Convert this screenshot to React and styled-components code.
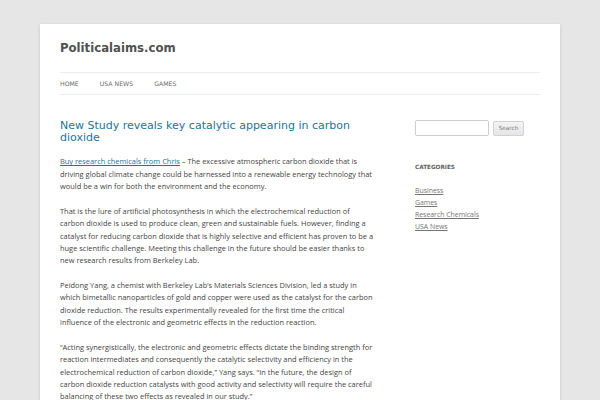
import React from "react";
import styled, { createGlobalStyle } from "styled-components";

const Global = createGlobalStyle`
  html, body { margin: 0; padding: 0; }
  body {
    background: #e6e6e6;
    font-family: "Open Sans", "Liberation Sans", Arial, sans-serif;
    color: #444;
    overflow: hidden;
  }
`;

const Page = styled.div`
  margin: 24px 40px 0;
  background: #fff;
  padding: 0 20px;
  height: 400px;
  box-shadow: 0 1px 3px rgba(100, 100, 100, 0.25);
`;

const Header = styled.header`
  padding-top: 13px;
`;

const SiteTitle = styled.h1`
  margin: 0;
  font-family: "DejaVu Sans", sans-serif;
  font-size: 11.7px;
  line-height: 23px;
  font-weight: 700;
  color: #515151;
`;

const Nav = styled.nav`
  margin-top: 12px;
  border-top: 1px solid #ededed;
  border-bottom: 1px solid #ededed;
  display: flex;
`;

const NavItem = styled.a`
  font-family: "DejaVu Sans", sans-serif;
  font-size: 6.2px;
  line-height: 21px;
  text-transform: uppercase;
  color: #6a6a6a;
  text-decoration: none;
  margin-right: ${(p) => p.$mr}px;
`;

const Main = styled.div`
  display: flex;
  justify-content: space-between;
  padding-top: 25px;
`;

const Content = styled.article`
  width: 314.5px;
`;

const EntryTitle = styled.h2`
  margin: 0 0 10.5px;
  font-family: "DejaVu Sans", sans-serif;
  font-size: 11px;
  line-height: 12.4px;
  font-weight: 400;
  color: #21759b;
`;

const Para = styled.p`
  margin: 0 0 12.37px;
  font-size: 7.45px;
  line-height: 12.37px;
  color: #444;
`;

const InlineLink = styled.a`
  color: #21759b;
  text-decoration: underline;
`;

const Sidebar = styled.aside`
  width: 125px;
`;

const SearchForm = styled.form`
  display: flex;
  align-items: center;
  gap: 4px;
`;

const SearchInput = styled.div`
  width: 72px;
  height: 14px;
  border: 1px solid #ccc;
  border-radius: 2px;
  background: #fff;
`;

const SearchButton = styled.div`
  width: 29px;
  height: 13px;
  border: 1px solid #d2d2d2;
  border-radius: 2px;
  background: linear-gradient(#f4f4f4, #e6e6e6);
  color: #7c7c7c;
  font-family: "DejaVu Sans", sans-serif;
  font-size: 5.7px;
  line-height: 13px;
  text-align: center;
`;

const WidgetTitle = styled.h3`
  margin: 25px 0 12px;
  font-family: "DejaVu Sans", sans-serif;
  font-size: 5.7px;
  line-height: 12px;
  font-weight: 700;
  text-transform: uppercase;
  color: #636363;
`;

const CatList = styled.ul`
  list-style: none;
  margin: 0;
  padding: 0;
`;

const CatItem = styled.li`
  font-size: 6.9px;
  line-height: 12px;
  a {
    color: #757575;
    text-decoration: underline;
  }
`;

export default function App() {
  return (
    <>
      <Global />
      <Page>
        <Header>
          <SiteTitle>Politicalaims.com</SiteTitle>
          <Nav>
            <NavItem $mr={21}>Home</NavItem>
            <NavItem $mr={21}>USA News</NavItem>
            <NavItem $mr={0}>Games</NavItem>
          </Nav>
        </Header>
        <Main>
          <Content>
            <EntryTitle>New Study reveals key catalytic appearing in carbon dioxide</EntryTitle>
            <Para>
              <InlineLink>Buy research chemicals from Chris</InlineLink> – The excessive atmospheric carbon dioxide that is driving global climate change could be harnessed into a renewable energy technology that would be a win for both the environment and the economy.
            </Para>
            <Para>
              That is the lure of artificial photosynthesis in which the electrochemical reduction of carbon dioxide is used to produce clean, green and sustainable fuels. However, finding a catalyst for reducing carbon dioxide that is highly selective and efficient has proven to be a huge scientific challenge. Meeting this challenge in the future should be easier thanks to new research results from Berkeley Lab.
            </Para>
            <Para>
              Peidong Yang, a chemist with Berkeley Lab’s Materials Sciences Division, led a study in which bimetallic nanoparticles of gold and copper were used as the catalyst for the carbon dioxide reduction. The results experimentally revealed for the first time the critical influence of the electronic and geometric effects in the reduction reaction.
            </Para>
            <Para>
              “Acting synergistically, the electronic and geometric effects dictate the binding strength for reaction intermediates and consequently the catalytic selectivity and efficiency in the electrochemical reduction of carbon dioxide,” Yang says. “In the future, the design of carbon dioxide reduction catalysts with good activity and selectivity will require the careful balancing of these two effects as revealed in our study.”
            </Para>
          </Content>
          <Sidebar>
            <SearchForm>
              <SearchInput />
              <SearchButton>Search</SearchButton>
            </SearchForm>
            <WidgetTitle>Categories</WidgetTitle>
            <CatList>
              <CatItem><a>Business</a></CatItem>
              <CatItem><a>Games</a></CatItem>
              <CatItem><a>Research Chemicals</a></CatItem>
              <CatItem><a>USA News</a></CatItem>
            </CatList>
          </Sidebar>
        </Main>
      </Page>
    </>
  );
}
